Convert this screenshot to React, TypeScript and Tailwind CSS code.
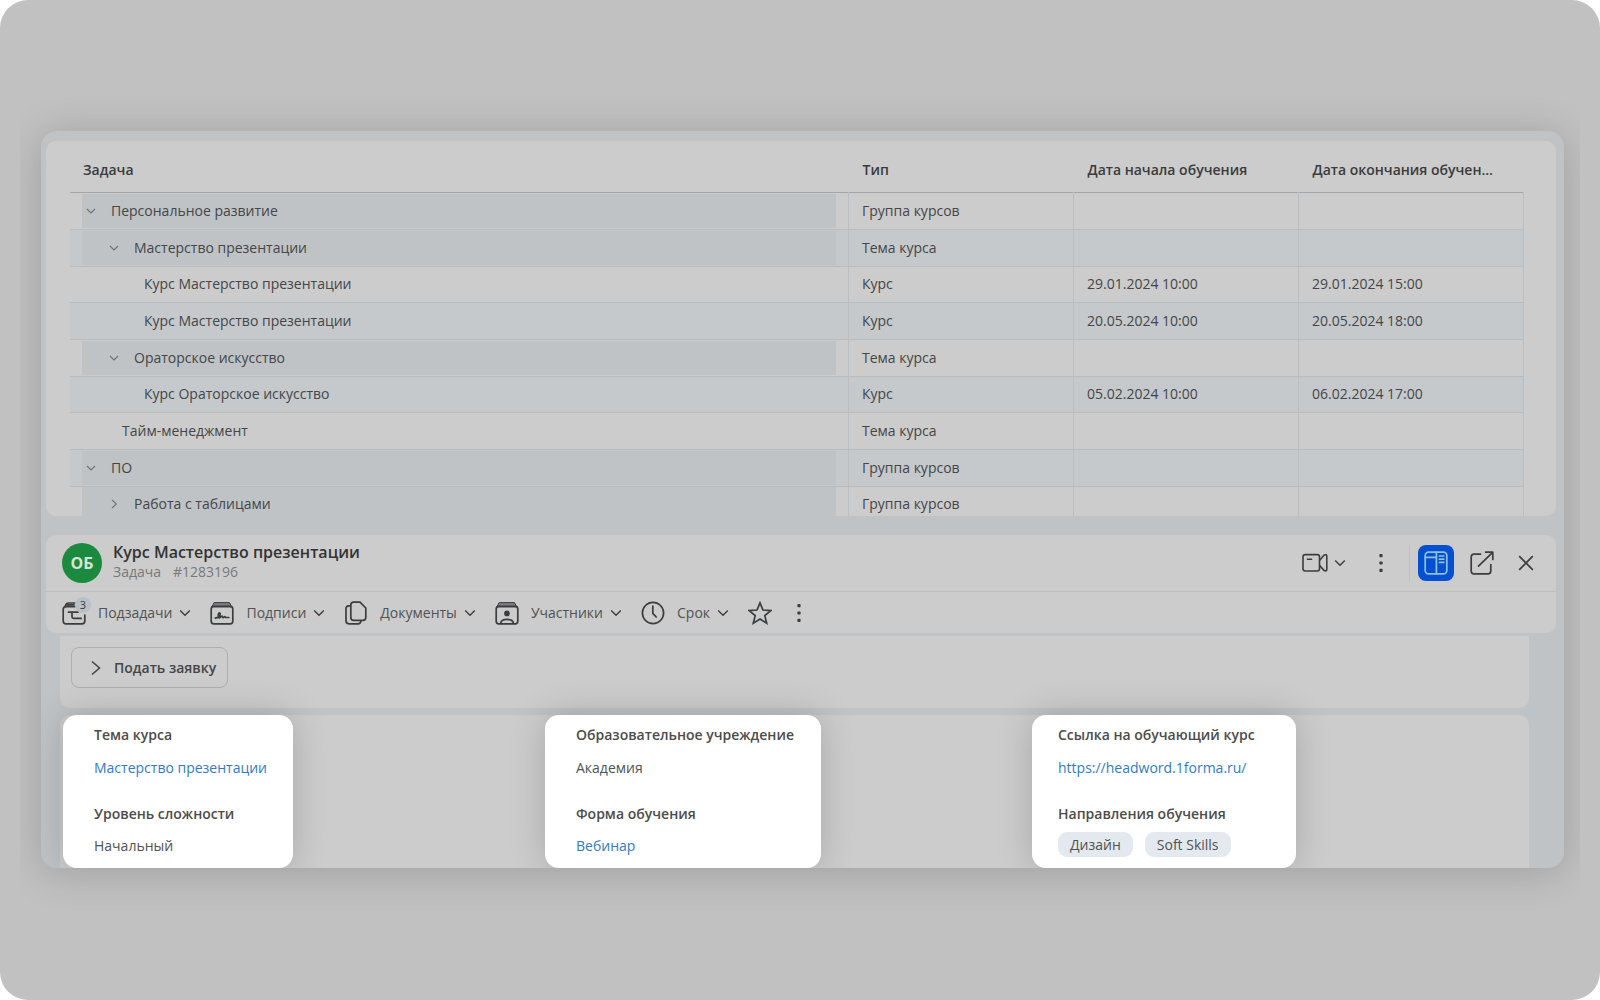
import type { ReactNode } from "react";
import clsx from "clsx";

type Row = {
    title: string;
    type: string;
    start?: string;
    end?: string;
    indent: string;
    state?: "open" | "closed";
};

const rows: Row[] = [
    { title: "Персональное развитие", type: "Группа курсов", indent: "pl-1", state: "open" },
    { title: "Мастерство презентации", type: "Тема курса", indent: "pl-[27px]", state: "open" },
    { title: "Курс Мастерство презентации", type: "Курс", start: "29.01.2024 10:00", end: "29.01.2024 15:00", indent: "pl-[62px]" },
    { title: "Курс Мастерство презентации", type: "Курс", start: "20.05.2024 10:00", end: "20.05.2024 18:00", indent: "pl-[62px]" },
    { title: "Ораторское искусство", type: "Тема курса", indent: "pl-[27px]", state: "open" },
    { title: "Курс Ораторское искусство", type: "Курс", start: "05.02.2024 10:00", end: "06.02.2024 17:00", indent: "pl-[62px]" },
    { title: "Тайм-менеджмент", type: "Тема курса", indent: "pl-10" },
    { title: "ПО", type: "Группа курсов", indent: "pl-1", state: "open" },
    { title: "Работа с таблицами", type: "Группа курсов", indent: "pl-[27px]", state: "closed" },
];

function Icon({ className = "size-6", children }: { className?: string; children: ReactNode }) {
    return (
        <svg
            viewBox="0 0 24 24"
            className={clsx("shrink-0", className)}
            fill="none"
            stroke="currentColor"
            strokeWidth={1.7}
            strokeLinecap="round"
            strokeLinejoin="round"
            aria-hidden="true"
        >
            {children}
        </svg>
    );
}

function Chevron({ closed, className = "size-3" }: { closed?: boolean; className?: string }) {
    return (
        <svg viewBox="0 0 12 12" className={clsx("shrink-0", className)} fill="none" stroke="currentColor" strokeWidth={1.4} aria-hidden="true">
            <path d={closed ? "M3.5 1 8.8 6l-5.3 5" : "M1.2 3.6 6 8.2l4.8-4.6"} />
        </svg>
    );
}

function DotsIcon() {
    return (
        <svg viewBox="0 0 4 20" className="h-5 w-1 shrink-0" fill="currentColor" aria-hidden="true">
            <rect x=".4" y="1" width="3.2" height="3.2" rx=".8" />
            <rect x=".4" y="8.4" width="3.2" height="3.2" rx=".8" />
            <rect x=".4" y="15.8" width="3.2" height="3.2" rx=".8" />
        </svg>
    );
}

// Folder-like frame shared by the toolbar icons
function BoxFrame() {
    return (
        <>
            <path d="M4.5 1.6h15l2.2 4.2H2.3z" fill="currentColor" fillOpacity=".55" strokeWidth="1" />
            <rect x="1.2" y="5.4" width="21.6" height="17.4" rx="2.6" />
        </>
    );
}

const toolbar = [
    {
        label: "Подзадачи",
        badge: 3,
        icon: (
            <Icon>
                <path d="M13 2H6.2Q4.6 2 4 3.4L3.2 5.4M12 3.8H4.5" />
                <path d="M13 5.6H4Q1.2 5.8 1.2 8.4V20q0 2.8 2.8 2.8h16q2.8 0 2.8-2.8v-6" />
                <path d="M6.5 11.2h9.5M10 11.2v4.6q0 1.6 1.6 1.6h7.6" />
            </Icon>
        ),
    },
    {
        label: "Подписи",
        icon: (
            <Icon>
                <BoxFrame />
                <path d="M5.2 17.2c3-.4 5.4-2.6 5-4.6-.3-1.4-2-.6-2 1.6 0 2.6 1.4 3.4 2.8 1.6.7-.9 1.3-.9 1.5 0 .2 1 1 1 1.6.2.6-.7 1.2-.2 1.5.5h3.2" />
            </Icon>
        ),
    },
    {
        label: "Документы",
        icon: (
            <Icon>
                <path d="M9.6 1.2h6.4l5.8 5.8v9.6q0 2.8-2.8 2.8H9.6q-2.8 0-2.8-2.8V4q0-2.8 2.8-2.8z" />
                <path d="M6 4.8H4.8Q2 4.8 2 7.6v12.2q0 3 3 3h9q2.6 0 2.9-2.6" />
            </Icon>
        ),
    },
    {
        label: "Участники",
        icon: (
            <Icon>
                <BoxFrame />
                <circle cx="12" cy="12.4" r="2" fill="currentColor" />
                <path d="M5.6 22.4c.4-3 3-4 6.4-4s6 1 6.4 4" />
            </Icon>
        ),
    },
    {
        label: "Срок",
        icon: (
            <Icon>
                <circle cx="12" cy="12" r="10.6" />
                <path d="M11.8 5v7.4l3.4 3.6" />
            </Icon>
        ),
    },
];

const cardBase =
    "flex h-[153px] flex-col items-start rounded-[14px] bg-white pt-[10px] shadow-[0_0_36px_rgba(0,0,0,0.18)]";

function Label({ children }: { children: ReactNode }) {
    return <dt className="h-5 text-[14px] leading-5 font-semibold whitespace-nowrap text-[#4c4c4c]">{children}</dt>;
}

function TreeCell({ row }: { row: Row }) {
    return (
        <div
            className={clsx(
                "mx-3 flex h-[34px] items-center text-[#444648]",
                row.indent,
                row.state && "bg-[#bfc3c6]",
            )}
        >
            {row.state && (
                <button type="button" aria-label="Развернуть" className="mr-[15px] text-[#707376]">
                    <Chevron closed={row.state === "closed"} className="size-2.5" />
                </button>
            )}
            {row.title}
        </div>
    );
}

function CourseTable() {
    return (
        <section className="mr-2 ml-[5px] h-[375px] overflow-hidden rounded-[10px] bg-[#cccccc] pr-8 pl-6">
            <table className="w-full table-fixed border-collapse text-left text-[14px] leading-5">
                <thead>
                    <tr className="h-[51px] border-b border-[#a4a6a7] text-[#3a3b3c]">
                        <th className="pt-2 pl-[13px] font-semibold">Задача</th>
                        <th className="w-[225px] pt-2 pl-[14px] font-semibold">Тип</th>
                        <th className="w-[225px] pt-2 pl-[14px] font-semibold">Дата начала обучения</th>
                        <th className="w-[225px] truncate pt-2 pr-[26px] pl-[14px] font-semibold">Дата окончания обучения</th>
                    </tr>
                </thead>
                <tbody>
                    {rows.map((row, i) => (
                        <tr key={i} className="h-[37px] border-b border-[#b9bcbf] even:bg-[#c5c9cc] nth-[3n]:h-9">
                            <td className="border-r border-[#bcbfc1] p-0">
                                <TreeCell row={row} />
                            </td>
                            {[row.type, row.start, row.end].map((text, j) => (
                                <td key={j} className="border-r border-[#bcbfc1] py-0 pl-[13px] text-[#444648]">
                                    {text}
                                </td>
                            ))}
                        </tr>
                    ))}
                </tbody>
            </table>
        </section>
    );
}

function TaskHeader() {
    return (
        <header className="mt-[19px] mr-2 ml-[5px] rounded-[10px] bg-[#cccccc] text-[#3c3d3e]">
            <div className="flex h-[57px] items-center border-b border-[#bec0c2] pr-[22px] pl-4">
                <div className="flex size-10 items-center justify-center rounded-full bg-[#1c8a3e] text-[16px] font-bold text-[#d4e4d8]">
                    ОБ
                </div>
                <div className="ml-[11px] pb-0.5">
                    <h1 className="text-[16px] leading-5 font-semibold text-[#333]">Курс Мастерство презентации</h1>
                    <p className="flex gap-3 text-[14px] leading-5 text-[#77797b]">
                        <span>Задача</span>
                        <span>#1283196</span>
                    </p>
                </div>
                <div className="ml-auto flex items-center">
                    <button type="button" aria-label="Видеозвонок" className="flex items-center gap-1.5">
                        <svg viewBox="0 0 26 20" className="h-5 w-[26px]" fill="none" stroke="currentColor" strokeWidth={1.6} strokeLinejoin="round" aria-hidden="true">
                            <rect x="1" y="1.6" width="16.5" height="16.4" rx="2.2" />
                            <path d="M4.8 6.2h5.4M17.5 7.5 22.2 2q2.6-1 2.6 1.2v13.2q0 2.2-2.6 1.2l-4.7-5.2" />
                        </svg>
                        <Chevron />
                    </button>
                    <button type="button" aria-label="Ещё" className="ml-[33px]">
                        <DotsIcon />
                    </button>
                    <span className="ml-[26px] h-9 w-px bg-[#bfc1c3]" />
                    <button
                        type="button"
                        aria-label="Боковая панель"
                        className="ml-2 flex size-9 items-center justify-center rounded-lg bg-[#0450d0] text-[#8fc0dc]"
                    >
                        <Icon>
                            <rect x="1.2" y="1.2" width="21.6" height="21.6" rx="3.4" />
                            <path d="M12.4 1.2v21.6M1.2 6.4h11.2M15.4 5h4.4M15.4 8.2h4.4M15.4 11.4h4.4" />
                        </Icon>
                    </button>
                    <button type="button" aria-label="Открыть в новом окне" className="ml-4">
                        <Icon>
                            <path d="M10.5 3.2H4Q1.2 3.2 1.2 6v14q0 2.8 2.8 2.8h14q2.8 0 2.8-2.8v-6.5" />
                            <path d="M8.5 15.2 22.6 1.4M15.6 1.2h7.2v7.2" />
                        </Icon>
                    </button>
                    <button type="button" aria-label="Закрыть" className="ml-6">
                        <svg viewBox="0 0 16 16" className="size-4" fill="none" stroke="currentColor" strokeWidth={1.7} aria-hidden="true">
                            <path d="m1.2 1.2 13.6 13.6M14.8 1.2 1.2 14.8" />
                        </svg>
                    </button>
                </div>
            </div>
            <nav className="flex h-[41px] items-center gap-[19px] pl-4 text-[14px]">
                {toolbar.map((item) => (
                    <button key={item.label} type="button" className="relative flex items-center">
                        {item.icon}
                        {item.badge && (
                            <span className="absolute -top-1 left-[13px] flex size-4 items-center justify-center rounded-full bg-[#b8c0c8] text-[11px] leading-4">
                                {item.badge}
                            </span>
                        )}
                        <span className="mr-[7px] ml-3 text-[#505254]">{item.label}</span>
                        <Chevron />
                    </button>
                ))}
                <button type="button" aria-label="В избранное">
                    <Icon>
                        <path strokeLinejoin="miter" d="m12 1.8 3 7.2 7.8.6-6 5 1.9 7.6L12 18.1l-6.7 4.1 1.9-7.6-6-5 7.8-.6z" />
                    </Icon>
                </button>
                <button type="button" aria-label="Ещё" className="ml-1.5">
                    <DotsIcon />
                </button>
            </nav>
        </header>
    );
}

function CourseDetails() {
    return (
        <section className="mr-[35px] ml-[19px] rounded-t-[10px] bg-[#cccccc] pr-5 pl-[3px]">
            <div className="grid grid-cols-3 text-[14px] leading-5 text-[#505254]">
                <dl className={clsx(cardBase, "w-[230px] pl-[31px]")}>
                    <Label>Тема курса</Label>
                    <dd className="mt-[13px]">
                        <a href="#topic" className="text-[#2f7bcb]">Мастерство презентации</a>
                    </dd>
                    <div className="mt-[26px]">
                        <Label>Уровень сложности</Label>
                        <dd className="mt-3">Начальный</dd>
                    </div>
                </dl>
                <dl className={clsx(cardBase, "w-[276px] pl-[31px]")}>
                    <Label>Образовательное учреждение</Label>
                    <dd className="mt-[13px]">Академия</dd>
                    <div className="mt-[26px]">
                        <Label>Форма обучения</Label>
                        <dd className="mt-3">
                            <a href="#webinar" className="text-[#2f7bcb]">Вебинар</a>
                        </dd>
                    </div>
                </dl>
                <dl className={clsx(cardBase, "ml-[5px] w-[264px] pl-[26px]")}>
                    <Label>Ссылка на обучающий курс</Label>
                    <dd className="mt-[13px]">
                        <a href="https://headword.1forma.ru/" className="text-[#2f7bcb]">https://headword.1forma.ru/</a>
                    </dd>
                    <div className="mt-[26px]">
                        <Label>Направления обучения</Label>
                        <dd className="mt-2 flex gap-3">
                            {["Дизайн", "Soft Skills"].map((tag) => (
                                <span key={tag} className="rounded-[9px] bg-[#e3e9ef] px-3 py-[3px] leading-[19px]">
                                    {tag}
                                </span>
                            ))}
                        </dd>
                    </div>
                </dl>
            </div>
        </section>
    );
}

export default function App() {
    return (
        <div className="min-h-screen bg-white font-['Open_Sans','Noto_Sans',sans-serif]">
            <div className="min-h-screen rounded-[28px] bg-[#c1c1c1] px-5 pt-[91px]">
                <div className="overflow-hidden pt-10 pr-4 pb-12 pl-[21px]">
                    <main className="overflow-hidden rounded-2xl bg-[#bfc3c6] pt-[10px] shadow-[0_4px_40px_rgba(0,0,0,0.18)]">
                        <CourseTable />
                        <TaskHeader />
                        <section className="mt-[3px] mr-[35px] ml-[19px] h-[72px] rounded-b-[10px] bg-[#cccccc] pt-[11px] pl-[11px]">
                            <button
                                type="button"
                                className="flex h-[41px] w-[157px] items-center rounded-lg border border-[#acaeaf] pl-[18px] text-[14px] font-semibold text-[#444648]"
                            >
                                <svg viewBox="0 0 12 16" className="mr-3 h-4 w-3" fill="none" stroke="currentColor" strokeWidth={1.6} aria-hidden="true">
                                    <path d="m2 1.5 7.5 6.5L2 14.5" />
                                </svg>
                                Подать заявку
                            </button>
                        </section>
                        <div className="h-[7px]" />
                        <CourseDetails />
                    </main>
                </div>
            </div>
        </div>
    );
}
